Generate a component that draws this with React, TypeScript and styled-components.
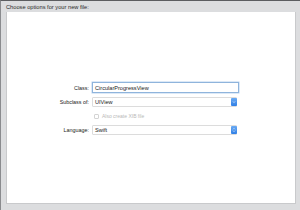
import { FC } from "react";
import styled, { createGlobalStyle } from "styled-components";

const GlobalStyle = createGlobalStyle`
  html, body { margin: 0; padding: 0; }
  body {
    width: 300px;
    height: 210px;
    overflow: hidden;
    background: #d7d8da;
    font-family: "Liberation Sans", Arial, sans-serif;
  }
`;

const Sheet = styled.div`
  width: 300px;
  height: 210px;
  box-sizing: border-box;
  border-top: 1px solid #5c5d60;
  border-left: 1px solid #8a8b8e;
  background: #dcdddf;
  display: flex;
  flex-direction: column;
`;

const Header = styled.div`
  height: 11px;
  padding-left: 5px;
  display: flex;
  align-items: center;
  font-size: 5.7px;
  color: #2a2a2a;
`;

const Panel = styled.div`
  margin: 0 4px 6px 5px;
  flex: 1;
  background: #ffffff;
  border: 1px solid #c9cacc;
  border-top: none;
  display: flex;
  justify-content: center;
  padding-top: 70px;
`;

const Form = styled.div`
  display: grid;
  grid-template-columns: 48px 147px;
  column-gap: 3px;
  row-gap: 4px;
  align-items: center;
  margin-left: -22px;
  align-self: flex-start;
`;

const Label = styled.div`
  text-align: right;
  font-size: 5.4px;
  color: #222;
`;

const TextField = styled.div`
  height: 11px;
  box-sizing: border-box;
  border: 1px solid #8fb4dc;
  box-shadow: 0 0 0 0.5px #b9d2ee;
  padding-left: 2px;
  display: flex;
  align-items: center;
  font-size: 5.6px;
  color: #1a1a1a;
`;

const Select = styled.div`
  height: 10px;
  width: 145px;
  box-sizing: border-box;
  border: 1px solid #dcdcdc;
  border-radius: 1px;
  padding-left: 2px;
  display: flex;
  align-items: center;
  justify-content: space-between;
  font-size: 5.6px;
  color: #1a1a1a;
`;

const Stepper = styled.div`
  width: 6px;
  height: 8px;
  margin-right: -1px;
  border-radius: 1px;
  background: linear-gradient(#6aaaf3, #2f7fe6);
  display: flex;
  align-items: center;
  justify-content: center;
`;

const CheckRow = styled.div`
  display: flex;
  align-items: center;
  gap: 3px;
  padding-left: 2px;
  height: 10px;
  font-size: 5px;
  color: #b8b8b8;
`;

const Box = styled.div`
  width: 5px;
  height: 5px;
  box-sizing: border-box;
  border: 0.6px solid #d4d4d4;
  border-radius: 1px;
`;

const Chevron: FC<{ double?: boolean }> = ({ double }) => (
  <svg width="4" height="6" viewBox="0 0 4 6">
    {double ? (
      <path d="M1 2.4 L2 1.4 L3 2.4 M1 3.6 L2 4.6 L3 3.6" stroke="#fff" strokeWidth="0.6" fill="none" />
    ) : (
      <path d="M1 2.5 L2 3.5 L3 2.5" stroke="#fff" strokeWidth="0.7" fill="none" />
    )}
  </svg>
);

const App: FC = () => (
  <>
    <GlobalStyle />
    <Sheet>
      <Header>Choose options for your new file:</Header>
      <Panel>
        <Form>
          <Label>Class:</Label>
          <TextField>CircularProgressView</TextField>
          <Label>Subclass of:</Label>
          <Select>
            UIView
            <Stepper>
              <Chevron />
            </Stepper>
          </Select>
          <span />
          <CheckRow>
            <Box />
            Also create XIB file
          </CheckRow>
          <Label>Language:</Label>
          <Select>
            Swift
            <Stepper>
              <Chevron double />
            </Stepper>
          </Select>
        </Form>
      </Panel>
    </Sheet>
  </>
);

export default App;
